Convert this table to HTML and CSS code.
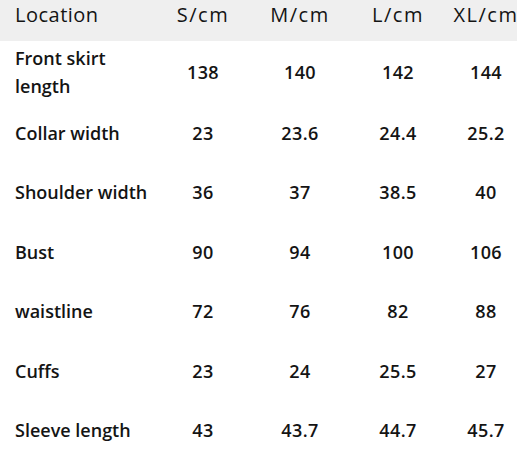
FILE: index.html
```html
<!DOCTYPE html>
<html>
<head>
<meta charset="utf-8">
<link rel="stylesheet" href="styles.css">
</head>
<body>
<div class="chart">
  <div class="row head">
    <div class="cell loc">Location</div>
    <div class="cell">S/cm</div>
    <div class="cell">M/cm</div>
    <div class="cell">L/cm</div>
    <div class="cell">XL/cm</div>
  </div>
  <div class="row first">
    <div class="cell loc">Front skirt<br>length</div>
    <div class="cell">138</div>
    <div class="cell">140</div>
    <div class="cell">142</div>
    <div class="cell">144</div>
  </div>
  <div class="row">
    <div class="cell loc">Collar width</div>
    <div class="cell">23</div>
    <div class="cell">23.6</div>
    <div class="cell">24.4</div>
    <div class="cell">25.2</div>
  </div>
  <div class="row">
    <div class="cell loc">Shoulder width</div>
    <div class="cell">36</div>
    <div class="cell">37</div>
    <div class="cell">38.5</div>
    <div class="cell">40</div>
  </div>
  <div class="row">
    <div class="cell loc">Bust</div>
    <div class="cell">90</div>
    <div class="cell">94</div>
    <div class="cell">100</div>
    <div class="cell">106</div>
  </div>
  <div class="row">
    <div class="cell loc">waistline</div>
    <div class="cell">72</div>
    <div class="cell">76</div>
    <div class="cell">82</div>
    <div class="cell">88</div>
  </div>
  <div class="row">
    <div class="cell loc">Cuffs</div>
    <div class="cell">23</div>
    <div class="cell">24</div>
    <div class="cell">25.5</div>
    <div class="cell">27</div>
  </div>
  <div class="row">
    <div class="cell loc">Sleeve length</div>
    <div class="cell">43</div>
    <div class="cell">43.7</div>
    <div class="cell">44.7</div>
    <div class="cell">45.7</div>
  </div>
</div>
</body>
</html>
```

FILE: styles.css
```css
html, body {
  margin: 0;
  padding: 0;
  background: #ffffff;
  overflow: hidden;
}
body {
  width: 517px;
  height: 454px;
  font-family: "Open Sans", "Noto Sans", sans-serif;
  color: #141414;
}
.chart {
  width: 524px;
}
.row {
  display: grid;
  grid-template-columns: 154px 98px 96px 100px 76px;
  align-items: center;
  height: 59.5px;
  font-size: 18px;
  font-weight: 600;
  letter-spacing: 0.4px;
}
.row .loc {
  letter-spacing: 0;
}
.row.head {
  height: 41px;
  align-items: start;
  background: #efefef;
  font-size: 20px;
  font-weight: 500;
  letter-spacing: 1.5px;
}
.row.head .loc {
  letter-spacing: 0.5px;
}
.row.head .cell {
  line-height: 29px;
}
.row.first {
  height: 62px;
}
.row.first .loc {
  line-height: 28px;
}
.cell {
  text-align: center;
  white-space: nowrap;
}
.cell.loc {
  text-align: left;
  padding-left: 15px;
}
```
